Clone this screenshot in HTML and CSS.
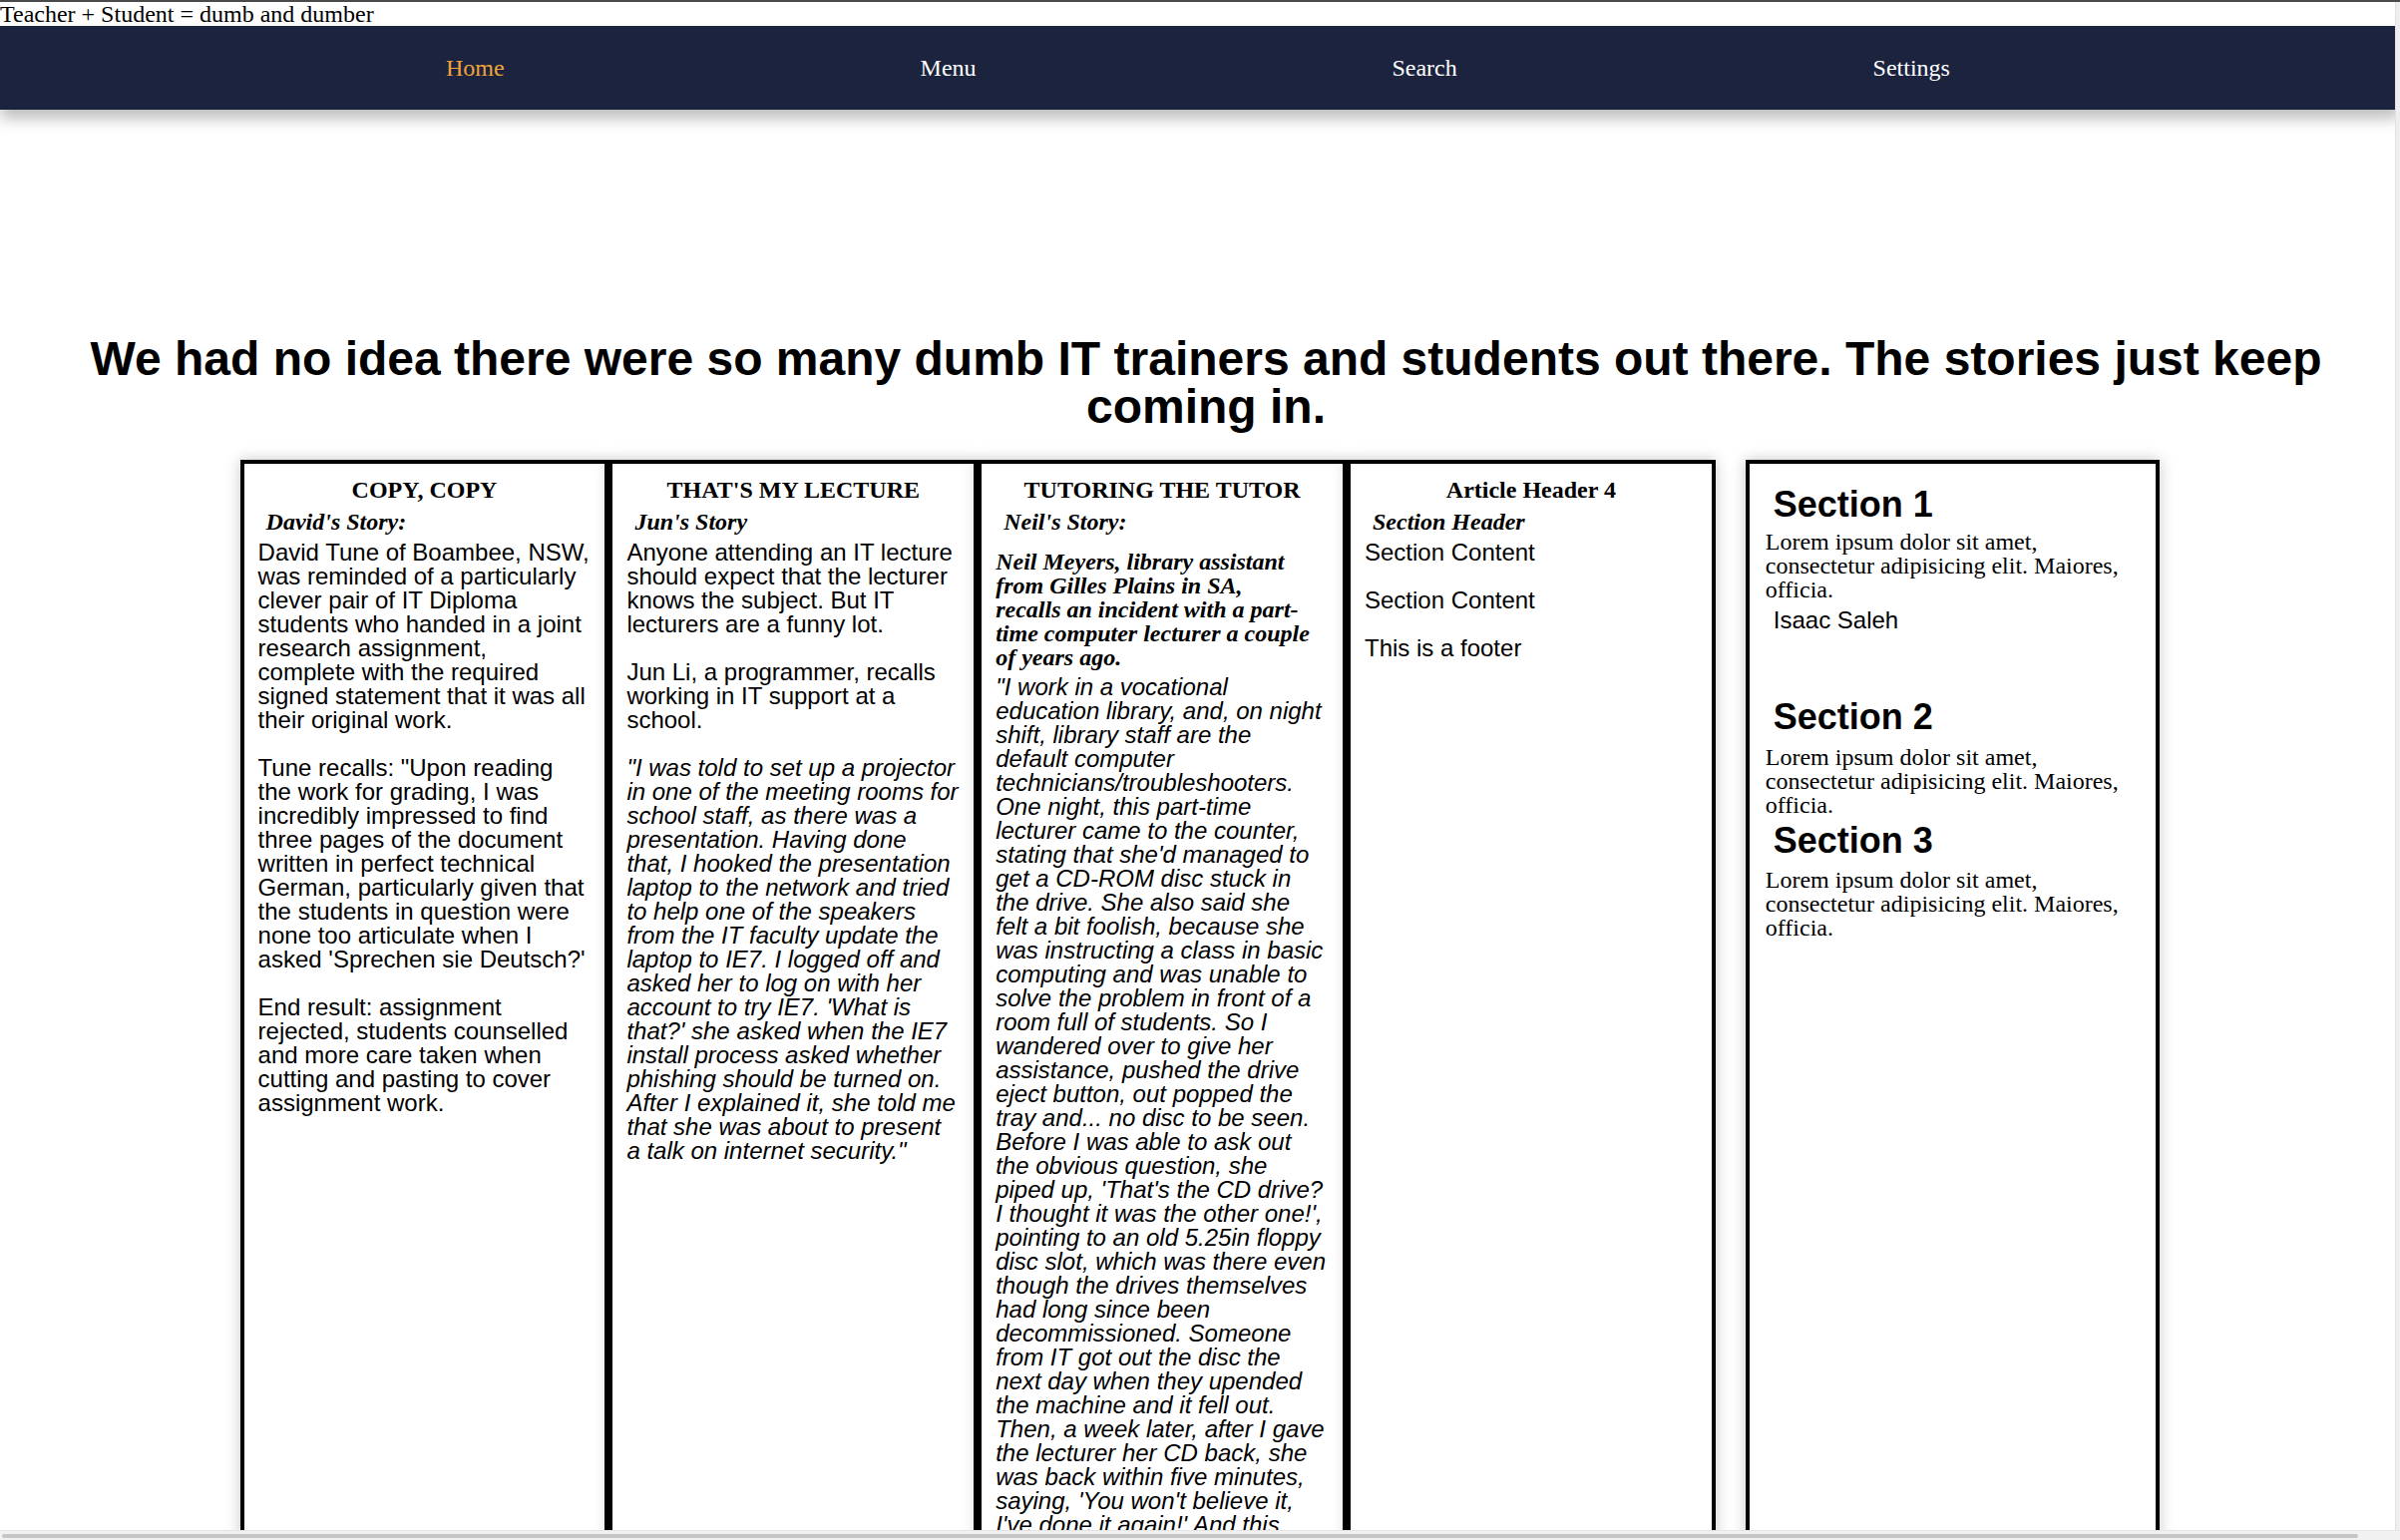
FILE: index.html
```html
<!DOCTYPE html>
<html lang="en">
<head>
<meta charset="utf-8">
<title>Teacher + Student = dumb and dumber</title>
<link rel="stylesheet" href="styles.css">
</head>
<body>
<header class="site-header">
  <div class="site-title">Teacher + Student = dumb and dumber</div>
  <nav class="topnav">
    <ul class="nav-list">
      <li><a class="nav-link is-active" href="#">Home</a></li>
      <li><a class="nav-link" href="#">Menu</a></li>
      <li><a class="nav-link" href="#">Search</a></li>
      <li><a class="nav-link" href="#">Settings</a></li>
    </ul>
  </nav>
</header>

<h1 class="headline">We had no idea there were so many dumb IT trainers and students out there. The stories just keep coming in.</h1>

<main class="layout">
  <div class="stories">
    <article class="story">
      <h2 class="story-title">COPY, COPY</h2>
      <h3 class="story-byline">David's Story:</h3>
      <p class="story-text">David Tune of Boambee, NSW,<br>was reminded of a particularly<br>clever pair of IT Diploma<br>students who handed in a joint<br>research assignment,<br>complete with the required<br>signed statement that it was all<br>their original work.</p>
      <p class="story-text">Tune recalls: "Upon reading<br>the work for grading, I was<br>incredibly impressed to find<br>three pages of the document<br>written in perfect technical<br>German, particularly given that<br>the students in question were<br>none too articulate when I<br>asked 'Sprechen sie Deutsch?'</p>
      <p class="story-text">End result: assignment<br>rejected, students counselled<br>and more care taken when<br>cutting and pasting to cover<br>assignment work.</p>
    </article>

    <article class="story">
      <h2 class="story-title">THAT'S MY LECTURE</h2>
      <h3 class="story-byline">Jun's Story</h3>
      <p class="story-text">Anyone attending an IT lecture<br>should expect that the lecturer<br>knows the subject. But IT<br>lecturers are a funny lot.</p>
      <p class="story-text">Jun Li, a programmer, recalls<br>working in IT support at a<br>school.</p>
      <p class="story-text is-quote">"I was told to set up a projector<br>in one of the meeting rooms for<br>school staff, as there was a<br>presentation. Having done<br>that, I hooked the presentation<br>laptop to the network and tried<br>to help one of the speakers<br>from the IT faculty update the<br>laptop to IE7. I logged off and<br>asked her to log on with her<br>account to try IE7. 'What is<br>that?' she asked when the IE7<br>install process asked whether<br>phishing should be turned on.<br>After I explained it, she told me<br>that she was about to present<br>a talk on internet security."</p>
    </article>

    <article class="story">
      <h2 class="story-title">TUTORING THE TUTOR</h2>
      <h3 class="story-byline">Neil's Story:</h3>
      <p class="story-lead">Neil Meyers, library assistant<br>from Gilles Plains in SA,<br>recalls an incident with a part-<br>time computer lecturer a couple<br>of years ago.</p>
      <p class="story-text is-quote">"I work in a vocational<br>education library, and, on night<br>shift, library staff are the<br>default computer<br>technicians/troubleshooters.<br>One night, this part-time<br>lecturer came to the counter,<br>stating that she'd managed to<br>get a CD-ROM disc stuck in<br>the drive. She also said she<br>felt a bit foolish, because she<br>was instructing a class in basic<br>computing and was unable to<br>solve the problem in front of a<br>room full of students. So I<br>wandered over to give her<br>assistance, pushed the drive<br>eject button, out popped the<br>tray and... no disc to be seen.<br>Before I was able to ask out<br>the obvious question, she<br>piped up, 'That's the CD drive?<br>I thought it was the other one!',<br>pointing to an old 5.25in floppy<br>disc slot, which was there even<br>though the drives themselves<br>had long since been<br>decommissioned. Someone<br>from IT got out the disc the<br>next day when they upended<br>the machine and it fell out.<br>Then, a week later, after I gave<br>the lecturer her CD back, she<br>was back within five minutes,<br>saying, 'You won't believe it,<br>I've done it again!' And this<br>time she had."</p>
    </article>

    <article class="story">
      <h2 class="story-title">Article Header 4</h2>
      <h3 class="story-byline">Section Header</h3>
      <p class="story-text">Section Content</p>
      <p class="story-text">Section Content</p>
      <footer class="story-text">This is a footer</footer>
    </article>
  </div>

  <aside class="sidebar">
    <section class="sidebar-section">
      <h2 class="sidebar-heading">Section 1</h2>
      <p class="sidebar-text">Lorem ipsum dolor sit amet, consectetur adipisicing elit. Maiores, officia.</p>
      <p class="sidebar-author">Isaac Saleh</p>
    </section>
    <section class="sidebar-section is-spaced">
      <h2 class="sidebar-heading">Section 2</h2>
      <p class="sidebar-text is-loose">Lorem ipsum dolor sit amet, consectetur adipisicing elit. Maiores, officia.</p>
    </section>
    <section class="sidebar-section is-tight">
      <h2 class="sidebar-heading">Section 3</h2>
      <p class="sidebar-text is-mid">Lorem ipsum dolor sit amet, consectetur adipisicing elit. Maiores, officia.</p>
    </section>
  </aside>
</main>

<div class="scrollbar-v"></div>
<div class="scrollbar-h"><div class="scrollbar-thumb"></div></div>
</body>
</html>
```

FILE: styles.css
```css
html, body {
  margin: 0;
  padding: 0;
}

body {
  background: #ffffff;
  color: #000000;
  font-family: "Liberation Serif", "Times New Roman", serif;
  font-size: 24px;
  line-height: 24px;
  border-top: 2px solid #4a4a4a;
}

.site-title {
  font-size: 24px;
  line-height: 24px;
  height: 24px;
}

.topnav {
  background: #1b233f;
  height: 84px;
  box-shadow: 0 9px 14px rgba(0, 0, 0, 0.26);
}

.nav-list {
  list-style: none;
  margin: 0 auto;
  padding: 0 4px 0 0;
  width: 80%;
  height: 100%;
  display: flex;
  justify-content: space-around;
  align-items: center;
}

.nav-link {
  color: #ffffff;
  text-decoration: none;
  font-family: "Liberation Serif", "Times New Roman", serif;
  font-size: 24px;
}

.nav-link.is-active {
  color: #f0a33a;
}

.headline {
  margin: 226px 34px 29px 46px;
  font-family: "Liberation Sans", Arial, Helvetica, sans-serif;
  font-size: 48px;
  line-height: 48px;
  font-weight: bold;
  text-align: center;
}

.layout {
  width: 80%;
  margin: 0 auto;
  display: flex;
  align-items: stretch;
}

.stories {
  flex: 0 0 76.85%;
  display: flex;
}

.story {
  flex: 1 1 0;
  min-width: 0;
  border: 4px solid #000000;
  padding: 14px 14px 24px;
  background: #ffffff;
  box-shadow: 0 0 14px rgba(0, 0, 0, 0.22);
}

.story-title {
  margin: 0 0 8px;
  font-family: "Liberation Serif", "Times New Roman", serif;
  font-size: 24px;
  line-height: 24px;
  font-weight: bold;
  text-align: center;
}

.story-byline {
  margin: 0 0 7px;
  padding-left: 8px;
  font-family: "Liberation Serif", "Times New Roman", serif;
  font-size: 24px;
  line-height: 24px;
  font-weight: bold;
  font-style: italic;
}

.story-text {
  display: block;
  margin: 0 0 24px;
  font-family: "Liberation Sans", Arial, Helvetica, sans-serif;
  font-size: 24px;
  line-height: 24px;
  white-space: nowrap;
}

.story-text.is-quote {
  font-style: italic;
}

.story-lead {
  margin: 16px 0 6px;
  font-family: "Liberation Serif", "Times New Roman", serif;
  font-size: 24px;
  line-height: 24px;
  font-weight: bold;
  font-style: italic;
  white-space: nowrap;
}

.sidebar {
  flex: 1 1 0;
  min-width: 0;
  margin-left: 30px;
  border: 4px solid #000000;
  padding: 23px 16px 24px;
  background: #ffffff;
  box-shadow: 0 0 14px rgba(0, 0, 0, 0.22);
}

.sidebar-section.is-spaced {
  margin-top: 67px;
}

.sidebar-section.is-tight {
  margin-top: 6px;
}

.sidebar-heading {
  margin: 0;
  padding-left: 8px;
  font-family: "Liberation Sans", Arial, Helvetica, sans-serif;
  font-size: 36px;
  line-height: 36px;
  font-weight: bold;
}

.sidebar-text {
  margin: 7px 0 0;
  font-family: "Liberation Serif", "Times New Roman", serif;
  font-size: 24px;
  line-height: 24px;
}

.sidebar-text.is-loose {
  margin-top: 10px;
}

.sidebar-text.is-mid {
  margin-top: 9px;
}

.sidebar-author {
  margin: 7px 0 0;
  padding-left: 8px;
  font-family: "Liberation Sans", Arial, Helvetica, sans-serif;
  font-size: 24px;
  line-height: 24px;
}

.scrollbar-v {
  position: fixed;
  top: 2px;
  right: 0;
  bottom: 0;
  width: 4px;
  background: #eeeeee;
  border-left: 1px solid #e2e2e2;
}

.scrollbar-h {
  position: fixed;
  left: 0;
  right: 0;
  bottom: 0;
  height: 9px;
  background: #f1f1f1;
  border-top: 1px solid #e4e4e4;
}

.scrollbar-thumb {
  margin: 3px 42px 0 2px;
  height: 4px;
  border-radius: 2px;
  background: #c6c6c6;
}
```
